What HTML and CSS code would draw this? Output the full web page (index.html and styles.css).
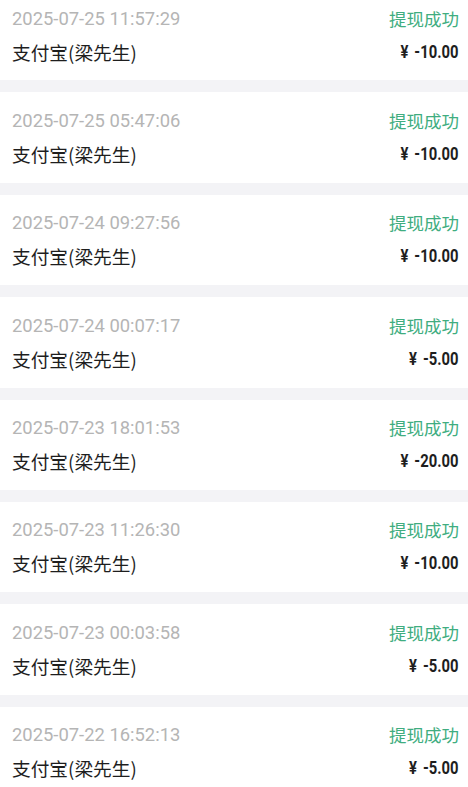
FILE: index.html
```html
<!DOCTYPE html>
<html lang="zh-CN">
<head>
  <meta charset="UTF-8" />
  <meta name="viewport" content="width=device-width, initial-scale=1.0"/>
  <title>提现记录</title>
  <link rel="stylesheet" href="styles.css">
</head>
<body>

<div class="list">
  <div class="record">
    <div class="row">
      <span class="time">2025-07-25 11:57:29</span>
      <span class="status">提现成功</span>
    </div>
    <div class="row">
      <span class="name">支付宝(梁先生)</span>
      <span class="amount"><span>¥ -10.00</span></span>
    </div>
  </div>

  <div class="record">
    <div class="row">
      <span class="time">2025-07-25 05:47:06</span>
      <span class="status">提现成功</span>
    </div>
    <div class="row">
      <span class="name">支付宝(梁先生)</span>
      <span class="amount"><span>¥ -10.00</span></span>
    </div>
  </div>

  <div class="record">
    <div class="row">
      <span class="time">2025-07-24 09:27:56</span>
      <span class="status">提现成功</span>
    </div>
    <div class="row">
      <span class="name">支付宝(梁先生)</span>
      <span class="amount"><span>¥ -10.00</span></span>
    </div>
  </div>

  <div class="record">
    <div class="row">
      <span class="time">2025-07-24 00:07:17</span>
      <span class="status">提现成功</span>
    </div>
    <div class="row">
      <span class="name">支付宝(梁先生)</span>
      <span class="amount"><span>¥ -5.00</span></span>
    </div>
  </div>

  <div class="record">
    <div class="row">
      <span class="time">2025-07-23 18:01:53</span>
      <span class="status">提现成功</span>
    </div>
    <div class="row">
      <span class="name">支付宝(梁先生)</span>
      <span class="amount"><span>¥ -20.00</span></span>
    </div>
  </div>

  <div class="record">
    <div class="row">
      <span class="time">2025-07-23 11:26:30</span>
      <span class="status">提现成功</span>
    </div>
    <div class="row">
      <span class="name">支付宝(梁先生)</span>
      <span class="amount"><span>¥ -10.00</span></span>
    </div>
  </div>

  <div class="record">
    <div class="row">
      <span class="time">2025-07-23 00:03:58</span>
      <span class="status">提现成功</span>
    </div>
    <div class="row">
      <span class="name">支付宝(梁先生)</span>
      <span class="amount"><span>¥ -5.00</span></span>
    </div>
  </div>

  <div class="record">
    <div class="row">
      <span class="time">2025-07-22 16:52:13</span>
      <span class="status">提现成功</span>
    </div>
    <div class="row">
      <span class="name">支付宝(梁先生)</span>
      <span class="amount"><span>¥ -5.00</span></span>
    </div>
  </div>
</div>

</body>
</html>
```

FILE: styles.css
```css
body {
  margin: 0;
  padding: 0;
  background: #f3f3f6;
  font-family: Roboto, "Noto Sans CJK SC", sans-serif;
  overflow: hidden;
}

.list {
  display: flex;
  flex-direction: column;
  gap: 12px;
  margin-top: -10px;
}

.record {
  height: 90.4px;
  box-sizing: border-box;
  background: #fff;
  padding: 15px 9px 0 12px;
  display: flex;
  flex-direction: column;
  gap: 7px;
}

.row {
  display: flex;
  justify-content: space-between;
  align-items: center;
  height: 26px;
}

.time {
  font-size: 18.4px;
  color: #b5b5b5;
}

.status {
  font-family: "Noto Sans CJK SC", sans-serif;
  font-size: 17.5px;
  color: #40ad80;
}

.name {
  font-family: "Noto Sans CJK SC", sans-serif;
  font-size: 18.7px;
  color: #1e1e1e;
}

.amount span {
  display: inline-block;
  font-family: Roboto, sans-serif;
  font-weight: 700;
  font-size: 19px;
  word-spacing: 3px;
  color: #1e1e1e;
  transform: scaleX(0.78);
  transform-origin: right center;
}
```
